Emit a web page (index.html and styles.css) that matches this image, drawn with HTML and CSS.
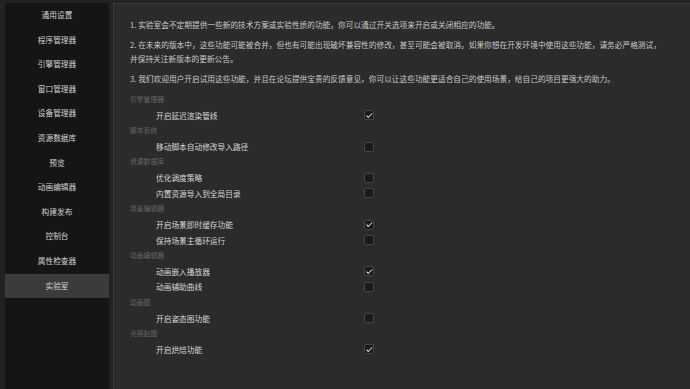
FILE: index.html
```html
<!DOCTYPE html>
<html lang="zh-CN">
<head>
    <meta charset="UTF-8">
    <meta name="viewport" content="width=device-width, initial-scale=1.0">
    <title>偏好设置 - 实验室</title>
    <link rel="stylesheet" href="styles.css">
</head>
<body>
    <div class="app">
        <!-- 左侧分类 -->
        <ul class="side-menu">
            <li>通用设置</li>
            <li>程序管理器</li>
            <li>引擎管理器</li>
            <li>窗口管理器</li>
            <li>设备管理器</li>
            <li>资源数据库</li>
            <li>预览</li>
            <li>动画编辑器</li>
            <li>构建发布</li>
            <li>控制台</li>
            <li>属性检查器</li>
            <li class="active">实验室</li>
        </ul>

        <!-- 实验室内容 -->
        <div class="content">
            <p>1. 实验室会不定期提供一些新的技术方案或实验性质的功能，你可以通过开关选项来开启或关闭相应的功能。</p>
            <p>2. 在未来的版本中，这些功能可能被合并，但也有可能出现破坏兼容性的修改，甚至可能会被取消。如果你想在开发环境中使用这些功能，请务必严格测试，<br>并保持关注新版本的更新公告。</p>
            <p>3. 我们欢迎用户开启试用这些功能，并且在论坛提供宝贵的反馈意见，你可以让这些功能更适合自己的使用场景，给自己的项目更强大的助力。</p>

            <div class="settings">
                <div class="group">引擎管理器</div>
                <div class="row"><span class="name">开启延迟渲染管线</span><span class="check on"></span></div>

                <div class="group">脚本系统</div>
                <div class="row"><span class="name">移动脚本自动修改导入路径</span><span class="check"></span></div>

                <div class="group">资源数据库</div>
                <div class="row"><span class="name">优化调度策略</span><span class="check"></span></div>
                <div class="row"><span class="name">内置资源导入到全局目录</span><span class="check"></span></div>

                <div class="group">场景编辑器</div>
                <div class="row"><span class="name">开启场景即时缓存功能</span><span class="check on"></span></div>
                <div class="row"><span class="name">保持场景主循环运行</span><span class="check"></span></div>

                <div class="group">动画编辑器</div>
                <div class="row"><span class="name">动画嵌入播放器</span><span class="check on"></span></div>
                <div class="row"><span class="name">动画辅助曲线</span><span class="check"></span></div>

                <div class="group">动画图</div>
                <div class="row"><span class="name">开启姿态图功能</span><span class="check"></span></div>

                <div class="group">光照贴图</div>
                <div class="row"><span class="name">开启烘焙功能</span><span class="check on"></span></div>
            </div>
        </div>
    </div>
</body>
</html>
```

FILE: styles.css
```css
html, body {
    margin: 0;
    height: 100%;
}
body {
    background-color: #222222;
    font-family: "Noto Sans CJK SC", "Noto Sans", sans-serif;
    font-size: 7.7px;
    color: #cccccc;
    overflow: hidden;
}
.app {
    display: flex;
    gap: 4px;
    height: 100%;
    padding: 3px 0 0 5px;
    box-sizing: border-box;
}
.side-menu {
    list-style: none;
    margin: 0;
    padding: 0;
    width: 104px;
    flex-shrink: 0;
    background-color: #151515;
}
.side-menu li {
    height: 24.6px;
    line-height: 23.6px;
    text-align: center;
    color: #d2d2d2;
}
.side-menu li.active {
    background-color: #3b3b3b;
}
.content {
    flex: 1;
    background-color: #2b2b2b;
    border: 1px solid #3a3a3a;
    border-right: none;
    border-bottom: none;
    padding: 14px 16px 13px 16px;
}
.content p {
    margin: 0 0 6px 0;
    line-height: 14px;
    white-space: nowrap;
    color: #c9c9c9;
}
.settings {
    margin-top: 5px;
}
.group {
    height: 15.6px;
    line-height: 15.6px;
    font-size: 6.8px;
    color: #666666;
}
.row {
    display: flex;
    align-items: center;
    height: 15.6px;
    padding-left: 26px;
}
.row .name {
    width: 208px;
    color: #d6d6d6;
}
.check {
    position: relative;
    width: 8px;
    height: 8px;
    background-color: #1a1a1a;
    border: 1px solid #454545;
    border-radius: 2px;
}
.check.on::after {
    content: "";
    position: absolute;
    left: 2.6px;
    top: 0.6px;
    width: 2px;
    height: 4.5px;
    border: solid #e6e6e6;
    border-width: 0 1.4px 1.4px 0;
    transform: rotate(45deg);
}
```
